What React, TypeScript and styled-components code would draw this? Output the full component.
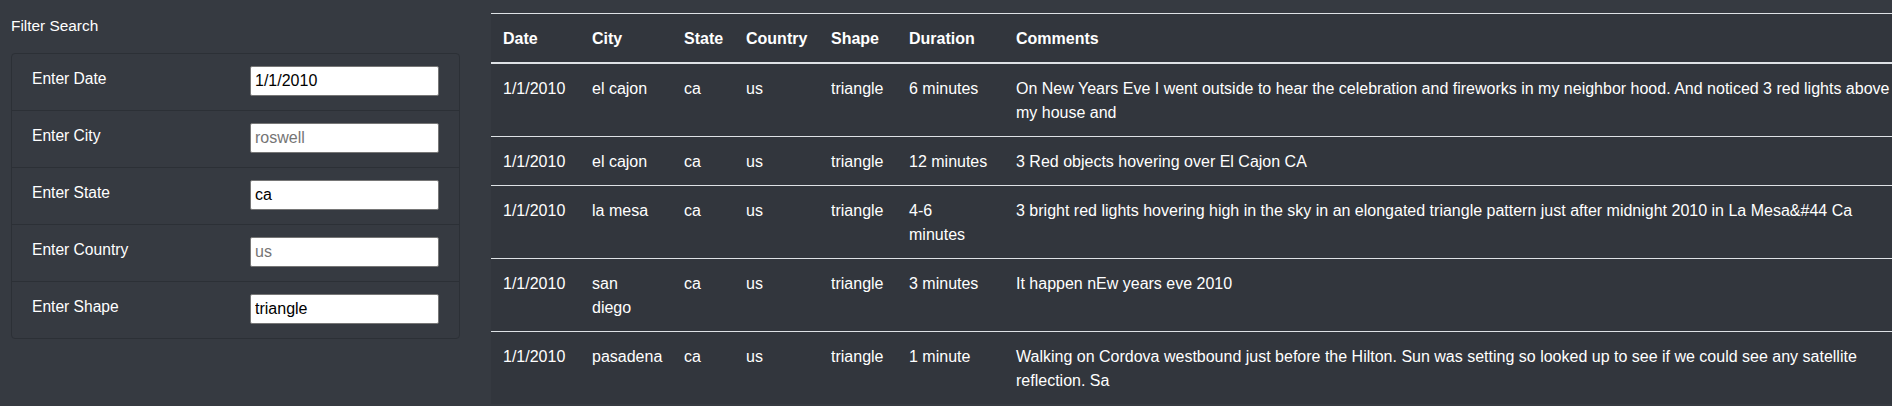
import React from "react";
import styled, { createGlobalStyle } from "styled-components";

const GlobalStyle = createGlobalStyle`
  html, body {
    margin: 0;
    padding: 0;
    overflow: hidden;
    background: #363a41;
  }
  body {
    min-height: 100vh;
    font-family: "Liberation Sans", Arial, sans-serif;
    font-size: 16px;
    line-height: 24px;
    color: #ffffff;
  }
`;

const Page = styled.div`
  display: flex;
  align-items: flex-start;
  gap: 31px;
  padding-left: 11px;
  min-height: 406px;
  background: #363a41;
`;

const FilterPanel = styled.aside`
  flex: none;
  width: 449px;
  padding-top: 14px;
`;

const PanelTitle = styled.h5`
  margin: 0 0 15px;
  font-size: 15.4px;
  line-height: 24px;
  font-weight: normal;
  color: #ffffff;
`;

const FilterCard = styled.ul`
  list-style: none;
  margin: 0;
  padding: 0;
  border: 1px solid #2c3036;
  border-radius: 4px;
  background: #363a41;
`;

const FilterRow = styled.li`
  display: flex;
  justify-content: space-between;
  align-items: flex-start;
  padding: 12px 20px 14px;
  border-top: 1px solid #2c3036;
  &:first-child {
    border-top: none;
  }
`;

const FilterLabel = styled.label`
  font-size: 15.6px;
  line-height: 24px;
  padding-top: 1px;
  color: #ffffff;
`;

const FilterInput = styled.input`
  box-sizing: border-box;
  width: 189px;
  height: 30px;
  padding: 1px 4px;
  border: 1px solid #767676;
  border-radius: 2px;
  background: #ffffff;
  color: #000000;
  font-family: "Liberation Sans", Arial, sans-serif;
  font-size: 16px;
  outline: none;
  &::placeholder {
    color: #757575;
  }
`;

const TableWrap = styled.section`
  flex: none;
  padding-top: 13px;
`;

const DataTable = styled.table`
  width: 1421px;
  table-layout: fixed;
  border-collapse: collapse;
  background: #32363d;
  color: #ffffff;
`;

const Col = styled.col<{ $w: number }>`
  width: ${(p) => p.$w}px;
`;

const HeadCell = styled.th`
  text-align: left;
  font-weight: bold;
  vertical-align: bottom;
  padding: 13px 12px 11px;
  border-top: 1px solid #dee2e6;
  border-bottom: 2px solid #dee2e6;
  line-height: 24px;
`;

const BodyRow = styled.tr`
  border-bottom: 1px solid #dee2e6;
  &:last-child {
    border-bottom: none;
  }
`;

const Cell = styled.td`
  vertical-align: top;
  padding: 13px 12px 11px;
  line-height: 24px;
  white-space: normal;
`;

type Filter = { label: string; value?: string; placeholder?: string };

const filters: Filter[] = [
  { label: "Enter Date", value: "1/1/2010" },
  { label: "Enter City", placeholder: "roswell" },
  { label: "Enter State", value: "ca" },
  { label: "Enter Country", placeholder: "us" },
  { label: "Enter Shape", value: "triangle" },
];

const columns: { title: string; width: number }[] = [
  { title: "Date", width: 89 },
  { title: "City", width: 92 },
  { title: "State", width: 62 },
  { title: "Country", width: 85 },
  { title: "Shape", width: 78 },
  { title: "Duration", width: 107 },
  { title: "Comments", width: 908 },
];

const rows: string[][] = [
  [
    "1/1/2010",
    "el cajon",
    "ca",
    "us",
    "triangle",
    "6 minutes",
    "On New Years Eve I went outside to hear the celebration and fireworks in my neighbor hood. And noticed 3 red lights above my house and",
  ],
  ["1/1/2010", "el cajon", "ca", "us", "triangle", "12 minutes", "3 Red objects hovering over El Cajon CA"],
  [
    "1/1/2010",
    "la mesa",
    "ca",
    "us",
    "triangle",
    "4-6 minutes",
    "3 bright red lights hovering high in the sky in an elongated triangle pattern just after midnight 2010 in La Mesa&#44 Ca",
  ],
  ["1/1/2010", "san diego", "ca", "us", "triangle", "3 minutes", "It happen nEw years eve 2010"],
  [
    "1/1/2010",
    "pasadena",
    "ca",
    "us",
    "triangle",
    "1 minute",
    "Walking on Cordova westbound just before the Hilton. Sun was setting so looked up to see if we could see any satellite reflection. Sa",
  ],
];

export default function App() {
  return (
    <>
      <GlobalStyle />
      <Page>
        <FilterPanel>
          <PanelTitle>Filter Search</PanelTitle>
          <FilterCard>
            {filters.map((f) => (
              <FilterRow key={f.label}>
                <FilterLabel>{f.label}</FilterLabel>
                <FilterInput type="text" defaultValue={f.value} placeholder={f.placeholder} />
              </FilterRow>
            ))}
          </FilterCard>
        </FilterPanel>
        <TableWrap>
          <DataTable>
            <colgroup>
              {columns.map((c) => (
                <Col key={c.title} $w={c.width} />
              ))}
            </colgroup>
            <thead>
              <tr>
                {columns.map((c) => (
                  <HeadCell key={c.title}>{c.title}</HeadCell>
                ))}
              </tr>
            </thead>
            <tbody>
              {rows.map((r, i) => (
                <BodyRow key={i}>
                  {r.map((v, j) => (
                    <Cell key={j}>{v}</Cell>
                  ))}
                </BodyRow>
              ))}
            </tbody>
          </DataTable>
        </TableWrap>
      </Page>
    </>
  );
}
